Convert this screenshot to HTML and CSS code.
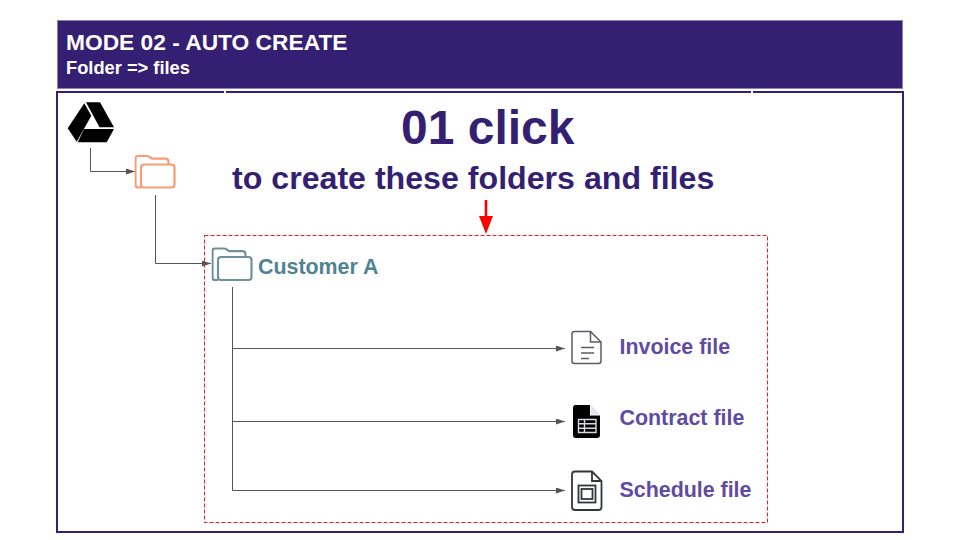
FILE: index.html
```html
<!DOCTYPE html>
<html lang="en">
<head>
<meta charset="utf-8">
<title>Mode 02 - Auto create</title>
<link rel="stylesheet" href="styles.css">
</head>
<body>
<main class="slide">
  <header class="banner">
    <h1 class="banner-title">MODE 02 - AUTO CREATE</h1>
    <p class="banner-sub">Folder =&gt; files</p>
  </header>
  <section class="canvas">
    <span class="tick tick-left"></span>
    <span class="tick tick-right"></span>
    <svg class="diagram" viewBox="56 91 848 442" aria-hidden="true">
      <defs>
        <marker id="arrow" markerWidth="9" markerHeight="6" refX="9" refY="3" orient="auto" markerUnits="userSpaceOnUse">
          <path d="M0 0 L9 3 L0 6 Z" fill="#555"/>
        </marker>
        <symbol id="folder" viewBox="0 0 42 35">
          <path d="M6.500 33 H3.500 Q1 33 1 30.500 V4 Q1 1.500 3.500 1.500 H12 Q14 1.500 15.500 2.700 L17.500 4.200 H31 Q34 4.200 34 7.500 V10" fill="none" stroke="currentColor" stroke-width="2.200"/>
          <rect x="6.500" y="10" width="33.500" height="23" rx="3" fill="none" stroke="currentColor" stroke-width="2.200"/>
        </symbol>
      </defs>

      <g class="links">
        <path d="M90.500 148 V171.500 H135" marker-end="url(#arrow)"/>
        <path d="M155.500 195 V263.500 H211" marker-end="url(#arrow)"/>
        <path d="M232.500 287 V490.500 H565" marker-end="url(#arrow)"/>
        <path d="M232.500 348.500 H565" marker-end="url(#arrow)"/>
        <path d="M232.500 421.500 H565" marker-end="url(#arrow)"/>
      </g>

      <rect class="group" x="204.500" y="235.500" width="563" height="287"/>
      <path class="down" d="M484.700 200 H487.300 V216 H493 L486 234 L479 216 H484.700 Z"/>

      <g class="drive">
        <path d="M86 102.300 H100 L114 127.300 H99.500 Z"/>
        <path d="M84.300 103.300 L91.300 115.700 L76.700 141.700 L67.700 128.300 Z"/>
        <path d="M84 129 H114 L106.700 142.300 H77.700 Z"/>
      </g>

      <use class="folder-orange" href="#folder" x="134.500" y="154.500" width="42" height="35"/>
      <use class="folder-slate" href="#folder" x="211.500" y="247" width="42" height="35"/>

      <g class="doc-line">
        <path d="M574 331.500 H590.500 L601 342 V361 Q601 363.500 598.500 363.500 H574.500 Q572 363.500 572 361 V334 Q572 331.500 574.500 331.500 Z"/>
        <path d="M590.500 331.500 V342 H601"/>
        <path d="M581 347.500 H594 M581 353 H594 M581 358.500 H589"/>
      </g>

      <g>
        <path class="doc-solid" d="M575.500 405 H590 V415.500 H600 V435 Q600 438 597 438 H575.500 Q573 438 573 435 V408 Q573 405 575.500 405 Z"/>
        <path class="doc-fold" d="M591 405 L600 414.500 H591 Z"/>
        <path class="doc-table" d="M578.500 419.500 H596 V432.500 H578.500 Z M578.500 423.800 H596 M578.500 428.200 H596 M584.500 419.500 V432.500"/>
      </g>

      <g class="doc-line doc-dark">
        <path d="M575 471.500 H592 L601.500 481 V507 Q601.500 510 598.500 510 H575 Q572 510 572 507 V474.500 Q572 471.500 575 471.500 Z"/>
        <path d="M592 471.500 V481 H601.500"/>
        <rect x="578.500" y="485.500" width="17" height="17"/>
        <rect x="581.500" y="489" width="11" height="10"/>
      </g>
    </svg>

    <h2 class="headline">01 click</h2>
    <p class="subline">to create these folders and files</p>
    <span class="label label-customer">Customer A</span>
    <span class="label label-file label-invoice">Invoice file</span>
    <span class="label label-file label-contract">Contract file</span>
    <span class="label label-file label-schedule">Schedule file</span>
  </section>
</main>
</body>
</html>
```

FILE: styles.css
```css
* {
  box-sizing: border-box;
}

html,
body {
  margin: 0;
  padding: 0;
  background: #ffffff;
}

body {
  width: 960px;
  height: 540px;
  overflow: hidden;
  font-family: "Liberation Sans", Arial, sans-serif;
}

.slide {
  display: flex;
  flex-direction: column;
  gap: 2px;
  padding: 20px 56px 0;
}

.banner {
  height: 69px;
  margin: 0 1px;
  padding: 9px 8px 0;
  background: #351f73;
  border: 1px solid #8d82b3;
  color: #ffffff;
}

.banner-title {
  margin: 0;
  font-size: 22.750px;
  line-height: 24px;
  font-weight: 700;
}

.banner-sub {
  margin: 4px 0 0;
  font-size: 18.300px;
  line-height: 19px;
  font-weight: 700;
}

.canvas {
  position: relative;
  width: 848px;
  height: 442px;
  border: 2px solid #351f73;
  color: #351f73;
}

.tick {
  position: absolute;
  top: -2px;
  width: 2px;
  height: 2px;
  background: #ffffff;
}

.tick-left {
  left: 166px;
}

.tick-right {
  left: 693px;
}

.diagram {
  position: absolute;
  top: -2px;
  left: -2px;
  width: 848px;
  height: 442px;
}

.links path {
  fill: none;
  stroke: #555555;
  stroke-width: 1;
}

.group {
  fill: none;
  stroke: #ee1c25;
  stroke-width: 1;
  stroke-dasharray: 4 2;
}

.down {
  fill: #ff0000;
}

.drive path {
  fill: #000000;
}

.folder-orange {
  color: #f79c74;
}

.folder-slate {
  color: #6f909e;
}

.doc-line path,
.doc-line rect {
  fill: none;
  stroke: #5b5b63;
  stroke-width: 1.500;
}

.doc-dark path,
.doc-dark rect {
  stroke: #33363a;
  stroke-width: 1.800;
}

.doc-solid {
  fill: #000000;
}

.doc-fold {
  fill: #e4e1f0;
}

.doc-table {
  fill: none;
  stroke: #d9d9de;
  stroke-width: 1.400;
}

.headline,
.subline,
.label {
  position: absolute;
  margin: 0;
  font-weight: 700;
  white-space: nowrap;
}

.headline {
  left: 343px;
  top: 7px;
  font-size: 48px;
  line-height: 56px;
}

.subline {
  left: 174px;
  top: 67px;
  font-size: 32.150px;
  line-height: 36px;
}

.label {
  font-size: 21.400px;
  line-height: 24px;
}

.label-customer {
  left: 200px;
  top: 162px;
  color: #4f8392;
}

.label-file {
  left: 561.500px;
  color: #5f4b9f;
}

.label-invoice {
  top: 242px;
}

.label-contract {
  top: 313px;
}

.label-schedule {
  top: 385px;
}
```
